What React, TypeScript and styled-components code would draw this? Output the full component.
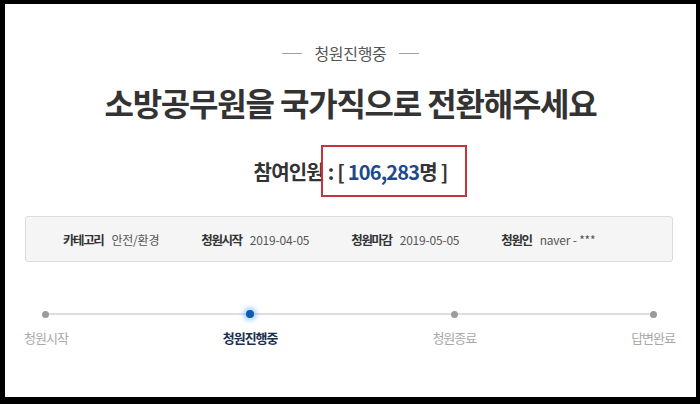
import styled, { createGlobalStyle } from 'styled-components';

const GlobalStyle = createGlobalStyle`
  html, body {
    margin: 0;
    padding: 0;
    background: #000;
  }
  body {
    font-family: "Noto Sans CJK KR", "Noto Sans", sans-serif;
  }
`

const Frame = styled.div`
  box-sizing: border-box;
  width: 700px;
  height: 404px;
  border-style: solid;
  border-color: #000;
  border-width: 4px 4px 7px 5px;
  background: #fff;
  display: flex;
  flex-direction: column;
  align-items: center;
  padding-top: 38px;
`
const Status = styled.div`
  display: flex;
  align-items: center;
  gap: 12px;
  font-size: 16px;
  line-height: 22px;
  color: #555;
  letter-spacing: -0.3px;
  &::before, &::after {
    content: "";
    width: 20px;
    height: 1px;
    background: #a0a0a0;
  }
`
const Title = styled.h1`
  margin: 19px 0 0;
  font-size: 32px;
  line-height: 38px;
  font-weight: 700;
  color: #333;
  letter-spacing: -1.2px;
`
const Count = styled.div`
  position: relative;
  margin-top: 37px;
  font-size: 20px;
  line-height: 28px;
  font-weight: 700;
  color: #333;
  letter-spacing: -0.8px;
`
const Num = styled.span`
  color: #1d4a8c;
`
const Highlight = styled.div`
  position: absolute;
  left: 67px;
  top: -13px;
  width: 146px;
  height: 52px;
  box-sizing: border-box;
  border: 2px solid #c4343c;
`
const InfoBox = styled.div`
  box-sizing: border-box;
  align-self: stretch;
  margin: 30px 23px 0 20px;
  height: 46px;
  background: #f5f5f5;
  border: 1px solid #dcdcdc;
  border-radius: 3px;
  display: flex;
  align-items: center;
  gap: 42px;
  padding-left: 37px;
  font-size: 12px;
  color: #555;
`
const InfoItem = styled.div`
  display: flex;
  align-items: baseline;
  gap: 8px;
`
const InfoLabel = styled.span`
  font-size: 12.5px;
  font-weight: 700;
  color: #333;
  letter-spacing: -1.4px;
`
const InfoValue = styled.span`
  letter-spacing: -0.2px;
`
const Steps = styled.div`
  position: relative;
  align-self: stretch;
  margin: 46px 21px 0 19px;
  display: flex;
  justify-content: space-between;
  &::before {
    content: "";
    position: absolute;
    left: 22px;
    right: 22px;
    top: 5px;
    height: 2px;
    background: #dedede;
  }
`
const Step = styled.div`
  position: relative;
  display: flex;
  flex-direction: column;
  align-items: center;
  gap: 9px;
`
const Dot = styled.div<{ $active?: boolean }>`
  width: 12px;
  height: 12px;
  display: flex;
  align-items: center;
  justify-content: center;
  &::after {
    content: "";
    width: ${p => (p.$active ? 8 : 7)}px;
    height: ${p => (p.$active ? 8 : 7)}px;
    border-radius: 50%;
    background: ${p => (p.$active ? '#0b5bb5' : '#9b9b9b')};
    box-shadow: ${p => (p.$active ? '0 0 4px 3px rgba(90, 165, 250, 0.45)' : 'none')};
  }
`
const StepLabel = styled.span<{ $active?: boolean }>`
  font-size: 13px;
  line-height: 18px;
  letter-spacing: -1px;
  color: ${p => (p.$active ? '#1c2f4f' : '#a8a8a8')};
  font-weight: ${p => (p.$active ? 700 : 400)};
`

const info = [
  { label: '카테고리', value: '안전/환경' },
  { label: '청원시작', value: '2019-04-05' },
  { label: '청원마감', value: '2019-05-05' },
  { label: '청원인', value: 'naver - ***' },
];

const steps = ['청원시작', '청원진행중', '청원종료', '답변완료'];

export default function App() {
  return (
    <>
      <GlobalStyle />
      <Frame>
        <Status>청원진행중</Status>
        <Title>소방공무원을 국가직으로 전환해주세요</Title>
        <Count>
          참여인원 : [ <Num>106,283</Num>명 ]
          <Highlight />
        </Count>
        <InfoBox>
          {info.map(i => (
            <InfoItem key={i.label}>
              <InfoLabel>{i.label}</InfoLabel>
              <InfoValue>{i.value}</InfoValue>
            </InfoItem>
          ))}
        </InfoBox>
        <Steps>
          {steps.map((s, idx) => (
            <Step key={s}>
              <Dot $active={idx === 1} />
              <StepLabel $active={idx === 1}>{s}</StepLabel>
            </Step>
          ))}
        </Steps>
      </Frame>
    </>
  );
}
